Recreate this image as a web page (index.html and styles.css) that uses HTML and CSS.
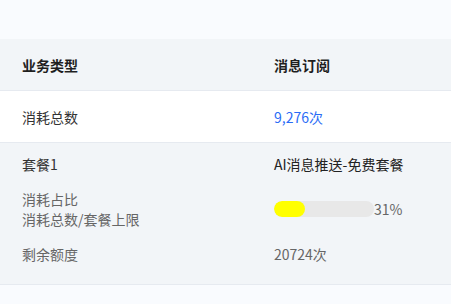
FILE: index.html
```html
<!DOCTYPE html>
<html lang="zh">
<head>
<meta charset="utf-8">
<link rel="stylesheet" href="styles.css">
</head>
<body>
<div class="page">
  <div class="row head">
    <div class="cell">业务类型</div>
    <div class="cell">消息订阅</div>
  </div>
  <div class="row total">
    <div class="cell">消耗总数</div>
    <div class="cell blue">9,276次</div>
  </div>
  <div class="pack">
    <div class="prow">
      <div class="cell dark">套餐1</div>
      <div class="cell darker">AI消息推送-免费套餐</div>
    </div>
    <div class="prow">
      <div class="cell gray">消耗占比<br>消耗总数/套餐上限</div>
      <div class="cell progress">
        <div class="track"><div class="fill" style="width:31%"></div></div>
        <span class="gray">31%</span>
      </div>
    </div>
    <div class="prow">
      <div class="cell gray">剩余额度</div>
      <div class="cell gray">20724次</div>
    </div>
  </div>
</div>
</body>
</html>
```
FILE: styles.css
```css
html, body {
  margin: 0;
  padding: 0;
  background: #f9fbfe;
}
body {
  font-family: "Noto Sans CJK SC", "Noto Sans", sans-serif;
  font-size: 14px;
  line-height: 20px;
  color: #333;
}
.page {
  padding-top: 39px;
}
.row {
  display: grid;
  grid-template-columns: 252px 1fr;
  padding: 16px 0 15px 22px;
  border-bottom: 1px solid #e6eaf0;
}
.head {
  background: #f2f5f8;
  font-weight: bold;
  color: #1f1f1f;
}
.total {
  background: #ffffff;
}
.blue {
  color: #2a6cf6;
}
.pack {
  background: #f2f5f8;
  padding: 11px 0 20px 22px;
  border-bottom: 1px solid #e6eaf0;
  display: flex;
  flex-direction: column;
  gap: 15px;
}
.prow {
  display: grid;
  grid-template-columns: 252px 1fr;
  align-items: center;
}
.dark { color: #333; }
.darker { color: #222; }
.gray { color: #666; }
.progress {
  display: flex;
  align-items: center;
}
.track {
  width: 100px;
  height: 16px;
  border-radius: 8px;
  background: #e8e8e8;
  overflow: hidden;
}
.fill {
  height: 100%;
  background: #ffff00;
  border-radius: 8px;
}
```
